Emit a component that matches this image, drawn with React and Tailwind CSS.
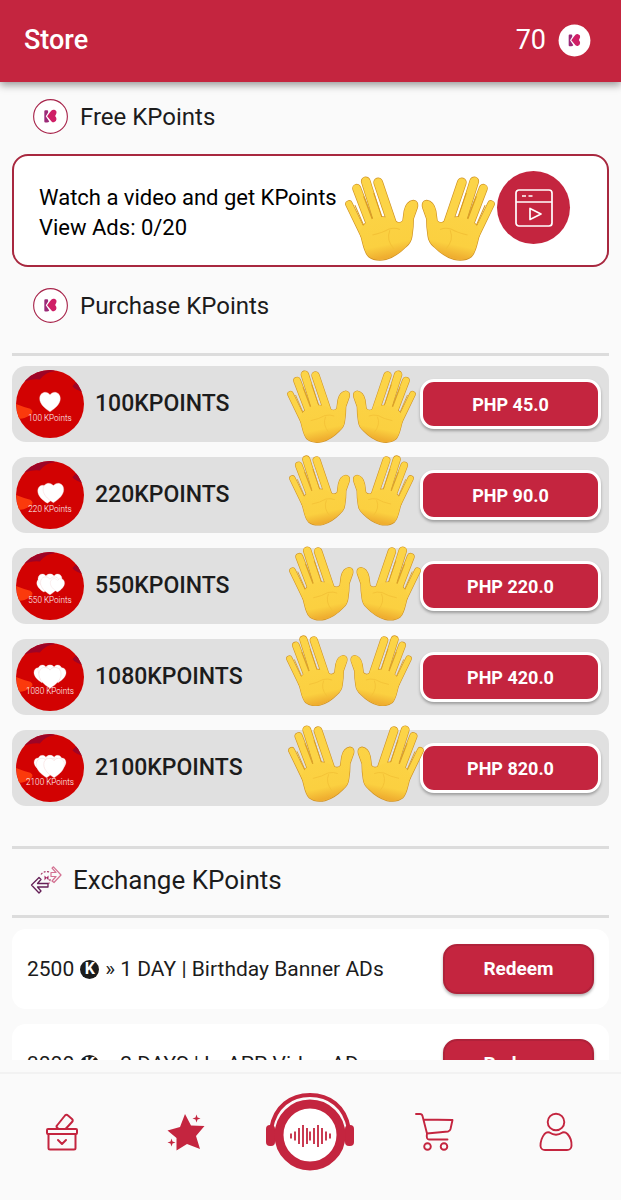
import React from "react";

const PACKS = [
  { id: 1, points: "100", price: "45.0", hearts: [[50, 44, 13]], hands: "right-[193px] -bottom-px w-[129px]" },
  { id: 2, points: "220", price: "90.0", hearts: [[46, 46, 12], [55, 44, 13]], hands: "right-[195px] top-[-2px] w-[125px]" },
  { id: 3, points: "550", price: "220.0", hearts: [[41, 47, 9], [44, 41, 10], [56, 41, 10], [50, 47, 12], [61, 47, 9]], hands: "right-[188px] top-[-2px] w-[132px]" },
  { id: 4, points: "1080", price: "420.0", hearts: [[38, 45, 10], [44, 41, 10], [56, 41, 10], [62, 45, 10], [50, 48, 14]], hands: "right-[197px] top-[-4px] w-[126px]" },
  { id: 5, points: "2100", price: "820.0", hearts: [[37, 43, 9], [44, 40, 10], [56, 40, 10], [63, 43, 9], [45, 47, 13], [56, 47, 13]], hands: "right-[185px] top-[-5px] w-[136px]" },
];

const REWARDS = [
  { id: 1, cost: 2500, label: "» 1 DAY | Birthday Banner ADs" },
  { id: 2, cost: 3000, label: "» 2 DAYS | In-APP Video ADs" },
];

function KMark() {
  return (
    <>
      <path d="M11 11.800q0-.9 1-.9h1.700q1 0 1 .9v1.400l-2.300 3.600 3.400 5q-1 1.200-2.500 1.100H12q-1 0-1-1z" fill="#9b2a78" />
      <path d="M16.300 13.100l1.700-1.900q1.100-1.100 2.700-.7 2.500.7 2.100 3-.2 1.200-1.300 2.900 1.500 1.800 1.300 3.200-.2 2.600-2.500 3-1.300.2-2.300-.8l-4.300-5z" fill="#cf1f66" />
    </>
  );
}

function KCoin({ className = "", ring = "none" }) {
  return (
    <svg viewBox="0 0 34 34" className={className} aria-hidden="true">
      <circle cx="17" cy="17" r="16.400" fill="#fff" stroke={ring} strokeWidth="1.100" />
      <KMark />
    </svg>
  );
}

const FINGERS = [
  { d: "M12 84 L56 175", w: 20 },
  { d: "M35 37 L80 155", w: 24 },
  { d: "M62 16 L104 150", w: 26 },
  { d: "M99 19 L146 158", w: 26 },
];

const PALM =
  "M44 164 Q58 136 86 126 Q124 116 148 134 Q162 146 173 134 L177 104 Q183 76 204 73 Q220 75 216 94 L204 128 Q204 154 200 178 Q198 198 182 211 Q154 240 122 249 Q91 256 70 240 Q60 230 52 196 Z";

function HandShape() {
  return (
    <>
      <g stroke="#cf9224" strokeLinecap="round" strokeLinejoin="round" fill="none">
        <path d={PALM} strokeWidth="4" />
        {FINGERS.map(({ d, w }) => (
          <path key={d} d={d} strokeWidth={w + 3} />
        ))}
      </g>
      <g stroke="#fcd447" strokeLinecap="round" fill="none">
        {FINGERS.map(({ d, w }) => (
          <path key={d} d={d} strokeWidth={w - 1} />
        ))}
      </g>
      <g stroke="#d99a22" strokeWidth="3" strokeLinecap="round">
        <path d="M30 88 56 148M56 62 84 136M86 52 113 130" />
      </g>
      <path d={PALM} fill="url(#palm)" />
      <path d="M82 176 Q112 170 132 158 Q150 154 164 160" fill="none" stroke="#f3c136" strokeWidth="3" />
      <path d="M134 162 Q122 190 146 218" fill="none" stroke="#f3c136" strokeWidth="3" />
    </>
  );
}

function Hands({ className }) {
  return (
    <svg viewBox="0 0 448 254" className={`absolute pointer-events-none ${className}`} aria-hidden="true">
      <defs>
        <linearGradient id="palm" x1="0" y1="0" x2="0.200" y2="1">
          <stop offset="0" stopColor="#fcd447" />
          <stop offset="0.800" stopColor="#fbd040" />
          <stop offset="1" stopColor="#efae30" />
        </linearGradient>
      </defs>
      <HandShape />
      <g transform="translate(448 0) scale(-1 1)">
        <HandShape />
      </g>
    </svg>
  );
}

function PackBadge({ points, hearts }) {
  return (
    <svg viewBox="0 0 100 100" className="size-[68px] shrink-0" aria-hidden="true">
      <defs>
        <clipPath id={`badge-${points}`}>
          <circle cx="50" cy="50" r="50" />
        </clipPath>
      </defs>
      <g clipPath={`url(#badge-${points})`}>
        <rect width="100" height="100" fill="#d20202" />
        <path d="M8 18 Q26 12 35 14 Q45 2 58 2 L50 -4 H0z" fill="#9d0426" />
        <path d="M100 33 Q87 29 83 24 L90 16z" fill="#9d0426" />
        <path d="M0 50 Q10 54 21 57 Q29 62 18 68 Q10 73 3 71z" fill="#fb3a0c" />
        {hearts.map(([x, y, r]) => (
          <path
            key={`${x}-${y}`}
            transform={`translate(${x} ${y}) scale(${r / 12})`}
            d="M0 16 C-8 11 -14 5 -14 -2 C-14 -11 -4 -13 0 -7 C4 -13 14 -11 14 -2 C14 5 8 11 0 16z"
            fill="#fff"
            stroke="#f0c8c8"
            strokeWidth="0.500"
          />
        ))}
        <text x="50" y="75" textAnchor="middle" fontSize="12" fill="#fff" fontFamily="Roboto, sans-serif" fontWeight="300">
          {points} KPoints
        </text>
      </g>
    </svg>
  );
}

function SectionTitle({ children }) {
  return (
    <div className="flex items-center gap-3 pl-[21px]">
      <KCoin className="size-[35px]" ring="#a8264c" />
      <h2 className="text-[24px] leading-8">{children}</h2>
    </div>
  );
}

function ExchangeIcon() {
  return (
    <svg viewBox="0 0 32 28" className="h-7 w-8" fill="none" strokeLinejoin="round" aria-hidden="true">
      <path d="M1.500 19 9 11.500l2 2-3.500 4H18v3.500H7.500l3.500 4-2 2z" stroke="#652057" strokeWidth="1.300" />
      <path d="M21 6.500h5l-4-4.300L23.500.8 31 9l-7 7.500-2-1.500 4-4.500h-5z" stroke="#d37292" strokeWidth="1.200" />
      <path d="M11 8.500q3-4 9-2.500M20 13q0 4-2 5" stroke="#a93a68" strokeWidth="1.200" strokeDasharray="2 1.500" />
      <path d="M14.500 9.500v5l2-2.500 2 2.500v-5l-2 2z" fill="#a22763" />
    </svg>
  );
}

function BallotIcon() {
  return (
    <svg viewBox="0 0 34 40" className="h-10 w-[34px]" fill="none" stroke="#c4253f" strokeWidth="2" strokeLinejoin="round" strokeLinecap="round">
      <rect x="2" y="17" width="30" height="5" rx="1" />
      <path d="M3.500 22v14q0 1.500 1.500 1.500h24q1.500 0 1.500-1.500V22M13 28l4 4 4-4M13.500 17l-1.500-1.500q-1-1 0-2l8-10q1.500-1.500 3 0l4 3.500q1.500 1.500 0 3L20.500 17" />
    </svg>
  );
}

function StarIcon() {
  return (
    <svg viewBox="0 0 38 38" className="size-[38px]" fill="#c4253f">
      <path d="M18 1 24 12.500 37.500 13 29 23 33 36 20 31 9.500 37.500 9.500 25 .5 17.500 13 14z" />
      <path d="M29.500 1.500l1 3 3 1-3 1-1 3-1-3-3-1 3-1zM4.500 25.500l1 3 3 1-3 1-1 3-1-3-3-1 3-1z" />
    </svg>
  );
}

function RadioIcon() {
  const bars = [[26, 5], [30, 9], [34, 16], [38, 22], [42, 16], [45, 9], [49, 16], [53, 22], [57, 16], [61, 9], [65, 5]];
  return (
    <svg viewBox="0 0 90 78" className="h-[78px] w-[90px]" fill="none" stroke="#c4253f">
      <path d="M6 36C10 13 26 2 45 2s35 11 39 34" strokeWidth="4" />
      <rect x="1" y="32" width="9" height="21" rx="4" fill="#c4253f" stroke="none" />
      <rect x="80" y="32" width="9" height="21" rx="4" fill="#c4253f" stroke="none" />
      <circle cx="45" cy="42" r="31" strokeWidth="9" fill="#fff" />
      {bars.map(([x, h]) => (
        <path key={x} d={`M${x} ${43 - h / 2}v${h}`} strokeWidth="1.800" />
      ))}
    </svg>
  );
}

function CartIcon() {
  return (
    <svg viewBox="0 0 39 38" className="h-[38px] w-[39px]" fill="none" stroke="#c4253f" strokeWidth="1.900" strokeLinejoin="round" strokeLinecap="round">
      <path d="M1 1h4q2 0 2.500 2L12 20.500 33 18.500q2-.5 2.500-2.500L37.500 7l-29-.5M12 20.500q-1 6 2 6h18.500" />
      <circle cx="12.500" cy="33.500" r="3.300" />
      <circle cx="29" cy="33.500" r="3.300" />
    </svg>
  );
}

function ProfileIcon() {
  return (
    <svg viewBox="0 0 40 40" className="size-10" fill="none" stroke="#c4253f" strokeWidth="1.900" strokeLinejoin="round">
      <circle cx="17" cy="10" r="8.300" />
      <path d="M10.500 20.500Q17 25 23.500 20.500 26 19.500 28.500 22 33 27 32.500 34 32 38 28 38H6q-4 0-4.500-4Q1.500 27 5.500 22q2.500-2.500 5-1.500z" />
    </svg>
  );
}

const TABS = [
  { label: "Vote", icon: BallotIcon },
  { label: "Stars", icon: StarIcon },
  { label: "Radio", icon: RadioIcon },
  { label: "Store", icon: CartIcon },
  { label: "Profile", icon: ProfileIcon },
];

export default function App() {
  return (
    <div className="flex h-screen flex-col bg-[#fafafa] font-['Roboto',sans-serif] text-[#1c1c1c]">
      <header className="z-10 flex h-[82px] shrink-0 items-center justify-between bg-[#c4253f] pr-[30px] pb-[2px] pl-6 text-white shadow-[0_3px_8px_rgba(0,0,0,0.4)]">
        <h1 className="text-[27px] leading-8 font-medium">Store</h1>
        <div className="flex items-center gap-3 text-[27px] leading-8">
          <span>70</span>
          <KCoin className="size-[33px]" />
        </div>
      </header>

      <main className="mb-3 min-h-0 flex-1 overflow-hidden px-3 pt-[17px]">
        <SectionTitle>Free KPoints</SectionTitle>

        <section className="relative mt-5 mb-[21px] flex h-[113px] items-center justify-between rounded-2xl border-2 border-[#a8283f] bg-white pt-1 pr-[37px] pl-[25px]">
          <p className="text-[22px] leading-[30px] text-black">
            Watch a video and get KPoints
            <br />
            View Ads: 0/20
          </p>
          <Hands className="right-[112px] bottom-1 w-[150px]" />
          <button type="button" aria-label="Watch video" className="mb-[10px] flex size-[73px] items-center justify-center rounded-full bg-[#c4253f]">
            <svg viewBox="0 0 38 38" className="size-[38px]" fill="none" stroke="#fff" strokeWidth="1.700" strokeLinejoin="round" aria-hidden="true">
              <rect x="1" y="1" width="36" height="36" rx="3" />
              <path d="M1 13h36M7 7h4M13.500 7h4M15 19.500v11l11-5.500z" />
            </svg>
          </button>
        </section>

        <SectionTitle>Purchase KPoints</SectionTitle>

        <section className="mt-[30px] border-t-3 border-[#dcdcdc] pt-[10px]">
          <ul className="flex flex-col gap-[15px]">
            {PACKS.map((pack) => (
              <li key={pack.id} className="relative flex h-[76px] items-center rounded-[14px] bg-[#e0e0e0] pr-2 pl-1">
                <PackBadge points={pack.points} hearts={pack.hearts} />
                <span className="ml-[11px] flex-1 text-[23px] leading-8 font-medium">{pack.points}KPOINTS</span>
                <button type="button" className="h-[50px] w-[181px] rounded-[14px] border-3 border-white bg-[#c4253f] text-[18px] font-bold text-white shadow-[0_2px_3px_rgba(0,0,0,0.3)]">
                  PHP {pack.price}
                </button>
                <Hands className={pack.hands} />
              </li>
            ))}
          </ul>
        </section>

        <div className="mt-10 flex h-[72px] items-center gap-[11px] border-y-3 border-[#dcdcdc] pb-1 pl-[18px]">
          <ExchangeIcon />
          <h2 className="text-[26px] leading-8">Exchange KPoints</h2>
        </div>

        <ul className="mt-[11px] flex flex-col gap-[15px]">
          {REWARDS.map((reward) => (
            <li key={reward.id} className="flex h-20 items-center justify-between rounded-[14px] bg-white px-[15px]">
              <span className="flex items-center gap-[6px] text-[21px] leading-7">
                {reward.cost}
                <span className="flex size-[19px] items-center justify-center rounded-full bg-[#1c1c1c] text-[16px] font-bold text-white">K</span>
                {reward.label}
              </span>
              <button type="button" className="h-[50px] w-[151px] rounded-[14px] border-2 border-[#b0223a] bg-[#c4253f] text-[19px] font-bold text-white shadow-[0_2px_3px_rgba(0,0,0,0.3)]">
                Redeem
              </button>
            </li>
          ))}
        </ul>
      </main>

      <nav className="grid h-32 shrink-0 grid-cols-5 border-t-2 border-[#f2f2f2] pb-[10px]">
        {TABS.map(({ label, icon: Icon }) => (
          <button key={label} type="button" aria-label={label} className="flex items-center justify-center">
            <Icon />
          </button>
        ))}
      </nav>
    </div>
  );
}
